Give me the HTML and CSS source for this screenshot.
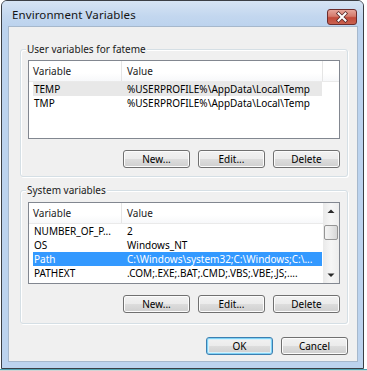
FILE: index.html
```html
<!DOCTYPE html>
<html>
<head>
<meta charset="utf-8">
<title>Environment Variables</title>
<link rel="stylesheet" href="styles.css">
</head>
<body>
<div class="window">
  <div class="titlebar">
    <span class="title">Environment Variables</span>
    <div class="close">
      <svg width="28" height="14" viewBox="0 0 28 14">
        <path d="M10.5 3.5 L17.5 10.5 M17.5 3.5 L10.5 10.5" stroke="#5a2a2a" stroke-width="3.6" stroke-linecap="square" fill="none"/>
        <path d="M10.5 3.5 L17.5 10.5 M17.5 3.5 L10.5 10.5" stroke="#ffffff" stroke-width="2" stroke-linecap="square" fill="none"/>
      </svg>
    </div>
  </div>
  <div class="client">
    <div class="group g1">
      <div class="legend">User variables for fateme</div>
      <div class="list l1">
        <div class="hdr">
          <div class="h1">Variable</div>
          <div class="h2">Value</div>
          <div class="h3"></div>
        </div>
        <div class="row sel-inactive"><div class="c1">TEMP</div><div class="c2">%USERPROFILE%\AppData\Local\Temp</div></div>
        <div class="row"><div class="c1">TMP</div><div class="c2">%USERPROFILE%\AppData\Local\Temp</div></div>
      </div>
      <div class="btns">
        <button class="btn">New...</button>
        <button class="btn">Edit...</button>
        <button class="btn">Delete</button>
      </div>
    </div>
    <div class="group g2">
      <div class="legend">System variables</div>
      <div class="list l2">
        <div class="listbody">
          <div class="hdr">
            <div class="h1">Variable</div>
            <div class="h2">Value</div>
          </div>
          <div class="row"><div class="c1">NUMBER_OF_P...</div><div class="c2">2</div></div>
          <div class="row"><div class="c1">OS</div><div class="c2">Windows_NT</div></div>
          <div class="row sel-active"><div class="c1">Path</div><div class="c2">C:\Windows\system32;C:\Windows;C:\...</div></div>
          <div class="row"><div class="c1">PATHEXT</div><div class="c2">.COM;.EXE;.BAT;.CMD;.VBS;.VBE;.JS;....</div></div>
        </div>
        <div class="scrollbar">
          <div class="sb-btn"><svg width="16" height="16" viewBox="0 0 16 16"><path d="M4.5 10 L8 6.5 L11.5 10 Z" fill="#2a2a2a"/></svg></div>
          <div class="sb-track">
            <div class="sb-thumb"></div>
          </div>
          <div class="sb-btn"><svg width="16" height="16" viewBox="0 0 16 16"><path d="M4.5 6.5 L8 10 L11.5 6.5 Z" fill="#2a2a2a"/></svg></div>
        </div>
      </div>
      <div class="btns">
        <button class="btn">New...</button>
        <button class="btn">Edit...</button>
        <button class="btn">Delete</button>
      </div>
    </div>
    <div class="dlgbtns">
      <button class="btn default">OK</button>
      <button class="btn">Cancel</button>
    </div>
  </div>
</div>
<div class="below"></div>
</body>
</html>
```

FILE: styles.css
```css
html, body {
  margin: 0;
  padding: 0;
}
body {
  background: #ffffff;
  width: 367px;
  height: 371px;
  overflow: hidden;
  font-family: "Noto Sans", "Open Sans", sans-serif;
  font-size: 10px;
  color: #000;
}
.window {
  margin-left: 1px;
  border: 1px solid #3b3f45;
  border-radius: 6px 6px 0 0;
  background: #bcd3ee;
  display: flex;
  flex-direction: column;
  padding: 0 5px 6px 6px;
  box-sizing: border-box;
  width: 363px;
  height: 369px;
}
.titlebar {
  height: 25px;
  margin: 0 -5px 0 -6px;
  padding: 0 6px 0 10px;
  background: linear-gradient(#d6e4f4, #c3d7ef 60%, #bcd3ee);
  border-radius: 5px 5px 0 0;
  display: flex;
  align-items: center;
  justify-content: space-between;
  flex: none;
}
.title {
  font-size: 11.5px;
  color: #141414;
  padding-top: 2px;
  letter-spacing: 0.1px;
}
.close {
  width: 28px;
  height: 14px;
  margin-top: 6px;
  border: 1px solid #6b2c2c;
  border-radius: 3px;
  background: linear-gradient(#e6a59a, #d47a6c 45%, #c24a3a 55%, #c9614f);
  display: flex;
  align-items: center;
  justify-content: center;
  box-sizing: content-box;
}
.close svg { display: block; }
.client {
  flex: 1;
  background: #f0f0f0;
  border: 1px solid #a6b8cc;
  padding: 22px 9px 0 11px;
  display: flex;
  flex-direction: column;
}
.group {
  position: relative;
  border: 1px solid #d5dfe5;
  border-radius: 3px;
  box-shadow: inset 1px 1px 0 #fff, 1px 1px 0 #fff;
  display: flex;
  flex-direction: column;
  padding: 10px 7px 8px 7px;
}
.g2 {
  margin-top: 13px;
  padding-top: 11px;
  padding-bottom: 10px;
}
.legend {
  position: absolute;
  top: -8px;
  left: 5px;
  padding: 0 1px;
  background: #f0f0f0;
  font-size: 10px;
  line-height: 14px;
  color: #1a1a1a;
}
.list {
  background: #fff;
  border: 1px solid #828790;
  display: flex;
  flex-direction: column;
}
.l1 { height: 77px; }
.l2 {
  height: 80px;
  flex-direction: row;
}
.listbody {
  flex: 1;
  display: flex;
  flex-direction: column;
}
.hdr {
  height: 21px;
  display: flex;
  background: linear-gradient(#ffffff, #ffffff 60%, #f7f8fa);
  border-bottom: 1px solid #eaeaea;
  box-sizing: border-box;
  flex: none;
  color: #1a1a1a;
}
.h1 {
  width: 88px;
  padding-left: 4px;
  border-right: 1px solid #e5e5e5;
  display: flex;
  align-items: center;
  flex: none;
}
.h2 {
  width: 195px;
  padding-left: 5px;
  border-right: 1px solid #e5e5e5;
  display: flex;
  align-items: center;
  flex: none;
}
.l2 .h2 { border-right: none; flex: 1; }
.h3 { flex: 1; }
.row {
  height: 14px;
  margin-left: 4px;
  width: 289px;
  display: flex;
  align-items: center;
  flex: none;
  white-space: nowrap;
}
.c1 {
  width: 88px;
  padding-left: 1px;
  flex: none;
  overflow: hidden;
}
.c2 {
  padding-left: 5px;
  flex: 1;
  overflow: hidden;
}
.sel-inactive { background: #e8e8e8; }
.sel-active { background: #3399ff; color: #fff; }
.scrollbar {
  width: 16px;
  flex: none;
  background: linear-gradient(90deg, #e9e9e9, #f6f6f6 50%, #ededed);
  display: flex;
  flex-direction: column;
}
.sb-btn {
  height: 16px;
  flex: none;
}
.sb-btn svg { display: block; }
.sb-track {
  flex: 1;
  padding-top: 6px;
}
.sb-thumb {
  width: 12px;
  height: 13px;
  margin-left: 1px;
  border: 1px solid #959595;
  border-radius: 2px;
  background: linear-gradient(90deg, #f4f4f4, #e8e8e8 50%, #d6d6d6);
}
.btns {
  display: flex;
  justify-content: flex-end;
  gap: 8px;
  margin-top: 11px;
}
.btn {
  width: 67px;
  height: 18px;
  padding: 0;
  font-family: "Noto Sans", "Open Sans", sans-serif;
  font-size: 10px;
  color: #000;
  border: 1px solid #707070;
  border-radius: 3px;
  background: linear-gradient(#f2f2f2, #ebebeb 50%, #dddddd 50%, #cfcfcf);
  box-shadow: inset 0 0 0 1px #fcfcfc;
  line-height: 16px;
}
.dlgbtns {
  display: flex;
  justify-content: flex-end;
  gap: 8px;
  margin-top: 13px;
}
.default {
  border-color: #3c7fb1;
  box-shadow: inset 0 0 0 1px #7fd2f5, inset 0 0 0 2px #d6f0fb;
  background: linear-gradient(#f2f2f2, #ebebeb 50%, #dddddd 50%, #cfcfcf);
}
.below {
  height: 2px;
  border-top: 1px solid #4fa3b2;
  background: #d4d4d4;
}
```
